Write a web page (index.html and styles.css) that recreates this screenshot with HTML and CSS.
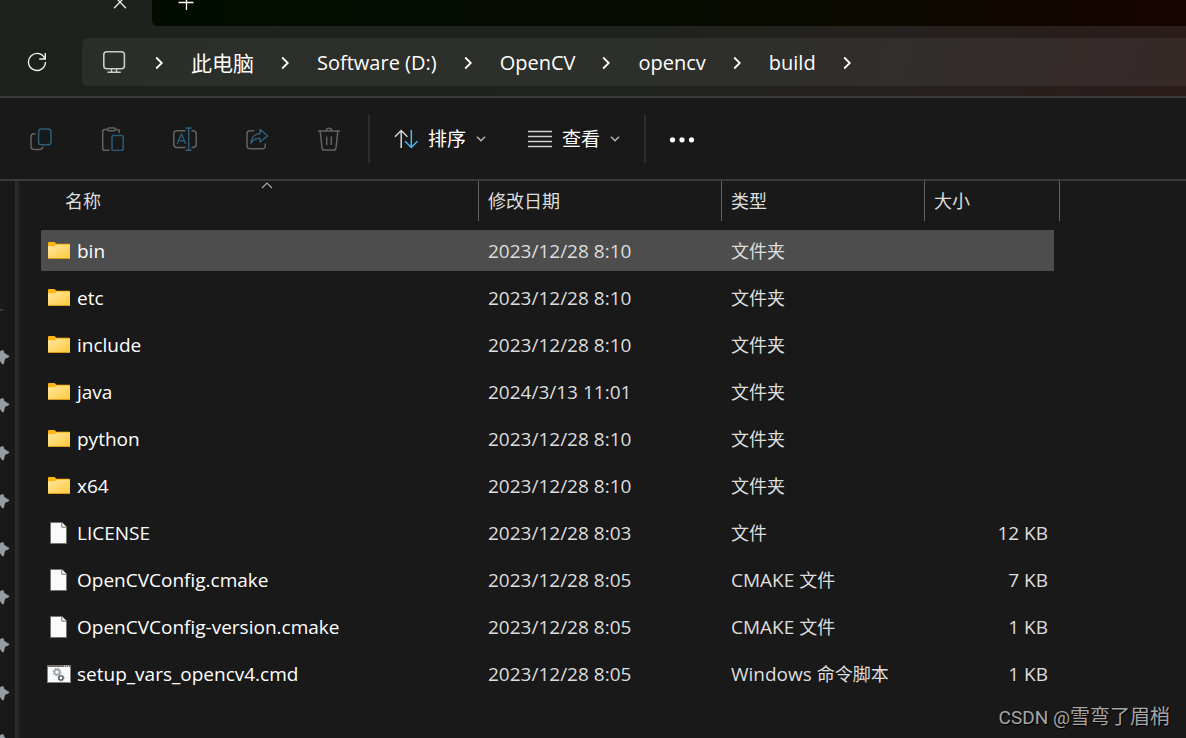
FILE: index.html
```html
<!DOCTYPE html>
<html lang="zh-CN">
<head>
<meta charset="utf-8">
<meta name="viewport" content="width=device-width, initial-scale=1">
<title>build</title>
<link rel="stylesheet" href="styles.css">
</head>
<body>
<svg class="defs" aria-hidden="true">
  <defs>
    <linearGradient id="folderFill" x1="0" y1="0" x2="1" y2="1">
      <stop offset="0" stop-color="#ffe7a2"/><stop offset="1" stop-color="#ffc937"/>
    </linearGradient>
    <symbol id="chevron" viewBox="0 0 8 14"><path d="M1.2 1.5 6.8 7 1.2 12.5" fill="none" stroke="#fff" stroke-width="1.8"/></symbol>
    <symbol id="down" viewBox="0 0 10 6"><path d="M1 .8 5 4.8 9 .8" fill="none" stroke="#bdbdbd" stroke-width="1.3"/></symbol>
    <symbol id="folder" viewBox="0 0 24 24">
      <path d="M1 4.1Q1 3 2 3H7.4L9.6 4.7H22Q23 4.7 23 5.7V12H1Z" fill="#fdb614"/>
      <path d="M1 7.3H7.6L9.6 5.8H23V18.9Q23 19.9 22 19.9H2Q1 19.9 1 18.9Z" fill="url(#folderFill)"/>
      <path d="M1 18.5Q1 20 2 20H22Q23 20 23 18.5V19H1Z" fill="#dd9a1d"/>
    </symbol>
    <symbol id="file" viewBox="0 0 24 24">
      <path d="M3.5 1.5H15L19.5 6V22.5H3.5Z" fill="#fafafa" stroke="#75726e"/>
      <path d="M14.8 1.5V6.2H19.5" fill="#fafafa" stroke="#75726e"/>
    </symbol>
    <symbol id="script" viewBox="0 0 24 24">
      <rect x=".5" y="3.5" width="23" height="17" fill="#fafafa" stroke="#84817e"/>
      <path d="M0 3H24V5H0Z" fill="#75726e"/>
      <path d="M17 4H22" stroke="#fff" stroke-dasharray="1 1"/>
      <circle cx="10" cy="10" r="2.7" fill="none" stroke="#9aa3a8" stroke-width="1.7"/>
      <circle cx="10" cy="10" r="3.9" fill="none" stroke="#9aa3a8" stroke-width="1" stroke-dasharray="1.5 1.56"/>
      <circle cx="14" cy="16" r="2.1" fill="none" stroke="#4e565b" stroke-width="1.4"/>
      <circle cx="14" cy="16" r="3" fill="none" stroke="#4e565b" stroke-width=".8" stroke-dasharray="1.2 1.16"/>
    </symbol>
    <symbol id="pin" viewBox="0 0 10 16"><path d="M0 2.2 3 .8 4.4 4 9.6 7.2 8 8.8 5.2 9.8 3.6 15.2 2.2 15.2 0 12Z" fill="#929da4"/></symbol>
  </defs>
</svg>
<div class="window">
  <header class="chrome">
    <div class="tabs">
      <div class="tab">
        <button class="icon-button" aria-label="关闭标签页"><svg width="14" height="14" viewBox="0 0 14 14"><path d="M1 .8 13 13.2M13 .8 1 13.2" fill="none" stroke="#eee" stroke-width="1.3"/></svg></button>
      </div>
      <div class="tab-strip">
        <button class="icon-button" aria-label="新建标签页"><svg width="16" height="16" viewBox="0 0 16 16"><path d="M.5 8.5H15.5M8.5 1V16" fill="none" stroke="#fff" stroke-width="1.3"/></svg></button>
      </div>
    </div>
    <div class="nav">
      <button class="icon-button refresh" aria-label="刷新"><svg width="20" height="20" viewBox="0 0 20 20"><path d="M18 7A8.5 8.5 0 1 0 18.5 10M18.3 1V7H12.2" fill="none" stroke="#eee" stroke-width="1.4"/></svg></button>
      <nav class="address" aria-label="路径">
        <button class="icon-button device" aria-label="此设备"><svg width="24" height="24" viewBox="0 0 24 24"><rect x="1.8" y="0.8" width="20.6" height="17" rx="3" fill="none" stroke="#ccc" stroke-width="1.6"/><path d="M9.5 18V21M14.5 18V21M5.5 21.2H18.8" fill="none" stroke="#ccc" stroke-width="1.5"/></svg></button>
        <svg class="chevron"><use href="#chevron"/></svg>
        <button class="crumb crumb-zh">此电脑</button>
        <svg class="chevron"><use href="#chevron"/></svg>
        <button class="crumb">Software (D:)</button>
        <svg class="chevron"><use href="#chevron"/></svg>
        <button class="crumb">OpenCV</button>
        <svg class="chevron"><use href="#chevron"/></svg>
        <button class="crumb">opencv</button>
        <svg class="chevron"><use href="#chevron"/></svg>
        <button class="crumb">build</button>
        <svg class="chevron"><use href="#chevron"/></svg>
      </nav>
    </div>
  </header>

  <div class="toolbar" role="toolbar" aria-label="命令">
    <div class="actions">
      <button class="icon-button" aria-label="复制"><svg width="24" height="24" viewBox="0 0 24 24" fill="none" stroke-width="1.5"><path d="M6.5 6.8H5Q2 6.8 2 10V19.5Q2 22.5 5 22.5H10.5Q13.6 22.5 13.8 19.8" stroke="#636363"/><rect x="9.6" y="2" width="12.4" height="15.8" rx="2.8" stroke="#2b5d78"/></svg></button>
      <button class="icon-button" aria-label="粘贴"><svg width="24" height="24" viewBox="0 0 24 24" fill="none" stroke-width="1.5"><path d="M7 2.5H3.5Q1.7 2.5 1.7 4.3V21.5Q1.7 23.3 3.5 23.3H8.5M14 2.5H16.5Q18.3 2.5 18.3 4.3V6" stroke="#636363"/><rect x="6.5" y="1" width="8" height="2.8" rx="1.4" stroke="#636363"/><rect x="11" y="8.5" width="11.2" height="15" rx="1.6" stroke="#2b5d78"/></svg></button>
      <button class="icon-button" aria-label="重命名"><svg width="24" height="24" viewBox="0 0 24 24" fill="none" stroke-width="1.5"><path d="M12.5 3.8H4Q.8 3.8 .8 7V17.2Q.8 20.4 4 20.4H12.5M18.5 3.8H20Q23.2 3.8 23.2 7V17.2Q23.2 20.4 20 20.4H18.5" stroke="#636363"/><path d="M4.2 17 8.2 7.5H8.8L12.7 17M5.7 13.8H11.3M12.5 .9H18.8M12.5 23.3H18.8M15.7 .9V23.3" stroke="#2b5d78"/></svg></button>
      <button class="icon-button" aria-label="共享"><svg width="24" height="24" viewBox="0 0 24 24" fill="none" stroke-width="1.5"><path d="M9 3.8H5Q2 3.8 2 6.8V18.8Q2 21.8 5 21.8H17Q20.3 21.8 20.3 18.5V16.5" stroke="#636363"/><path d="M15 6.5V2.4L22.5 8.8 15 15V11.2Q9.5 10.8 6 16.2 6.5 7.2 15 6.5Z" stroke="#2b5d78" stroke-linejoin="round"/></svg></button>
      <button class="icon-button" aria-label="删除"><svg width="24" height="24" viewBox="0 0 24 24" fill="none" stroke="#636363" stroke-width="1.5"><path d="M1 4H23M3.2 4 5 20.8Q5.3 23 7.3 23H16.7Q18.7 23 19 20.8L20.8 4M9 4Q9 1.3 12 1.3T15 4M9.7 9.5V18M14.3 9.5V18"/></svg></button>
    </div>
    <div class="menus">
      <button class="menu"><svg width="24" height="24" viewBox="0 0 24 24" fill="none" stroke-width="1.5"><path d="M7.2 21V3.5M1 9.7 7.2 3.5 13.4 9.7" stroke="#d6d6d6"/><path d="M17.3 3V20.5M11.1 14.3 17.3 20.5 23.5 14.3" stroke="#4cb5ef"/></svg><span>排序</span><svg class="down"><use href="#down"/></svg></button>
      <button class="menu"><svg width="24" height="24" viewBox="0 0 24 24"><path d="M0 4.5H24M0 9.5H24M0 14.5H24M0 19.5H24" stroke="#d2d2d2" stroke-width="1.5"/></svg><span>查看</span><svg class="down"><use href="#down"/></svg></button>
    </div>
    <button class="icon-button more" aria-label="更多"><svg width="26" height="24" viewBox="0 0 26 24" fill="#fff"><circle cx="3.5" cy="12.8" r="2.6"/><circle cx="13" cy="12.8" r="2.6"/><circle cx="22.5" cy="12.8" r="2.6"/></svg></button>
  </div>

  <div class="content">
    <aside class="sidebar" aria-label="快速访问">
      <hr>
      <svg class="pin"><use href="#pin"/></svg><svg class="pin"><use href="#pin"/></svg><svg class="pin"><use href="#pin"/></svg><svg class="pin"><use href="#pin"/></svg><svg class="pin"><use href="#pin"/></svg><svg class="pin"><use href="#pin"/></svg><svg class="pin"><use href="#pin"/></svg><svg class="pin"><use href="#pin"/></svg><svg class="pin"><use href="#pin"/></svg>
    </aside>
    <main class="files">
      <table>
        <colgroup><col class="col-name"><col class="col-date"><col class="col-type"><col class="col-size"></colgroup>
        <thead>
          <tr>
            <th class="name" aria-sort="ascending"><button>名称</button><svg class="sorted" viewBox="0 0 12 7"><path d="M1 6 6 1 11 6" fill="none" stroke="#aaa" stroke-width="1.2"/></svg></th>
            <th><button>修改日期</button></th>
            <th><button>类型</button></th>
            <th><button>大小</button></th>
          </tr>
        </thead>
        <tbody>
          <tr class="selected"><td><div class="entry"><svg><use href="#folder"/></svg>bin</div></td><td>2023/12/28 8:10</td><td><span class="zh">文件夹</span></td><td></td></tr>
          <tr><td><div class="entry"><svg><use href="#folder"/></svg>etc</div></td><td>2023/12/28 8:10</td><td><span class="zh">文件夹</span></td><td></td></tr>
          <tr><td><div class="entry"><svg><use href="#folder"/></svg>include</div></td><td>2023/12/28 8:10</td><td><span class="zh">文件夹</span></td><td></td></tr>
          <tr><td><div class="entry"><svg><use href="#folder"/></svg>java</div></td><td>2024/3/13 11:01</td><td><span class="zh">文件夹</span></td><td></td></tr>
          <tr><td><div class="entry"><svg><use href="#folder"/></svg>python</div></td><td>2023/12/28 8:10</td><td><span class="zh">文件夹</span></td><td></td></tr>
          <tr><td><div class="entry"><svg><use href="#folder"/></svg>x64</div></td><td>2023/12/28 8:10</td><td><span class="zh">文件夹</span></td><td></td></tr>
          <tr><td><div class="entry"><svg><use href="#file"/></svg>LICENSE</div></td><td>2023/12/28 8:03</td><td><span class="zh">文件</span></td><td>12 KB</td></tr>
          <tr><td><div class="entry"><svg><use href="#file"/></svg>OpenCVConfig.cmake</div></td><td>2023/12/28 8:05</td><td>CMAKE <span class="zh">文件</span></td><td>7 KB</td></tr>
          <tr><td><div class="entry"><svg><use href="#file"/></svg>OpenCVConfig-version.cmake</div></td><td>2023/12/28 8:05</td><td>CMAKE <span class="zh">文件</span></td><td>1 KB</td></tr>
          <tr><td><div class="entry"><svg><use href="#script"/></svg>setup_vars_opencv4.cmd</div></td><td>2023/12/28 8:05</td><td>Windows <span class="zh">命令脚本</span></td><td>1 KB</td></tr>
        </tbody>
      </table>
    </main>
  </div>
  <div class="watermark">CSDN @<span class="author">雪弯了眉梢</span></div>
</div>
</body>
</html>
```
FILE: styles.css
```css
* { box-sizing: border-box; }

body {
  margin: 0;
  background: #191919;
  color: #fff;
  font-family: "Open Sans", "Noto Sans CJK SC", sans-serif;
  font-size: 19px;
}

svg { display: block; flex: none; }
.defs { position: absolute; width: 0; height: 0; }

button {
  padding: 0;
  border: 0;
  background: none;
  color: inherit;
  font: inherit;
  line-height: 24px;
}

.window {
  position: relative;
  display: flex;
  flex-direction: column;
  height: 100vh;
  overflow: hidden;
}

.chrome {
  flex: none;
  background: linear-gradient(105deg, #1d211c 0%, #20221d 55%, #25211e 75%, #2a1c1b 100%);
  border-bottom: 2px solid #3a3a3a;
}

.tabs { display: flex; height: 26px; }
.tab {
  display: flex;
  justify-content: flex-end;
  width: 152px;
  padding-right: 25px;
}
.tab .icon-button, .tab-strip .icon-button { height: 16px; margin-top: -6px; }
.tab-strip {
  display: flex;
  flex: 1;
  padding-left: 26px;
  border-bottom-left-radius: 6px;
  background: linear-gradient(90deg, #040c00 0%, #060c01 45%, #0c0a00 72%, #170300 100%);
}

.nav { display: flex; align-items: center; height: 70px; padding-top: 2px; }
.refresh { padding: 0 35px 0 27px; }
.address {
  display: flex;
  flex: 1;
  align-items: center;
  gap: 27px;
  height: 48px;
  padding: 2px 0 0 20px;
  border-radius: 6px 0 0 6px;
  background: rgba(255, 255, 255, 0.06);
  font-size: 20px;
  white-space: nowrap;
  overflow: hidden;
}
.device { margin-right: 2px; }
.crumb { padding-left: 1px; }
.crumb-zh { font-size: 21px; }
.chevron { width: 8px; height: 14px; }

.toolbar {
  display: flex;
  flex: none;
  align-items: center;
  height: 83px;
  border-bottom: 2px solid #3a3a3a;
}
.actions { display: flex; gap: 48px; padding: 0 27px 0 29px; }
.menus {
  display: flex;
  align-items: center;
  gap: 42px;
  height: 48px;
  padding: 0 24px;
  border: solid #2d2d2d;
  border-width: 0 2px;
}
.menu { display: flex; align-items: center; gap: 10px; }
.down { width: 10px; height: 6px; }
.more { margin-left: 23px; }

.content { display: flex; flex: 1; min-height: 0; }

.sidebar {
  display: flex;
  flex: none;
  flex-direction: column;
  gap: 32px;
  width: 20px;
  border-right: 2px solid #202020;
  box-shadow: inset -3px 0 #2b2b2b;
  overflow: hidden;
}
.sidebar hr {
  flex: none;
  width: 3px;
  height: 2px;
  margin: 128px 0 6px;
  border: 0;
  background: #3a3a3a;
}
.pin { width: 10px; height: 16px; }

.files { flex: 1; padding-left: 21px; overflow: hidden; }

table {
  width: 1019px;
  table-layout: fixed;
  border-collapse: separate;
  border-spacing: 0;
}
.col-name { width: 438px; }
.col-date { width: 243px; }
.col-type { width: 203px; }

th {
  position: relative;
  height: 40px;
  padding: 0 0 0 9px;
  border-right: 1px solid #636363;
  color: #dedede;
  font-size: 18px;
  font-weight: 400;
  text-align: left;
}
th.name { padding-left: 24px; }
th button { display: block; }
.sorted {
  position: absolute;
  top: 1px;
  left: 220px;
  width: 12px;
  height: 7px;
}

td {
  height: 47px;
  padding: 0 0 0 9px;
  border: solid transparent;
  border-width: 3px 0;
  background-clip: padding-box;
  color: #dedede;
  white-space: nowrap;
}
tbody::before { content: ""; display: block; height: 6px; }
td:first-child { padding-left: 6px; color: #fff; border-radius: 4px 0 0 4px; }
td:last-child {
  padding-right: 6px;
  border-right-width: 6px;
  text-align: right;
}
.selected td { background-color: #4d4d4d; }
.entry { display: flex; align-items: center; gap: 6px; line-height: 24px; }
.entry svg { width: 24px; height: 24px; }
.zh { font-size: 18px; }

.watermark {
  position: absolute;
  right: 16px;
  bottom: 6px;
  color: #a6a6a6;
  font-family: Roboto, "Noto Sans CJK SC", sans-serif;
  font-size: 19px;
  line-height: 28px;
  text-shadow: 1px 1px 1px #000;
}
.author { font-size: 20px; }
```
